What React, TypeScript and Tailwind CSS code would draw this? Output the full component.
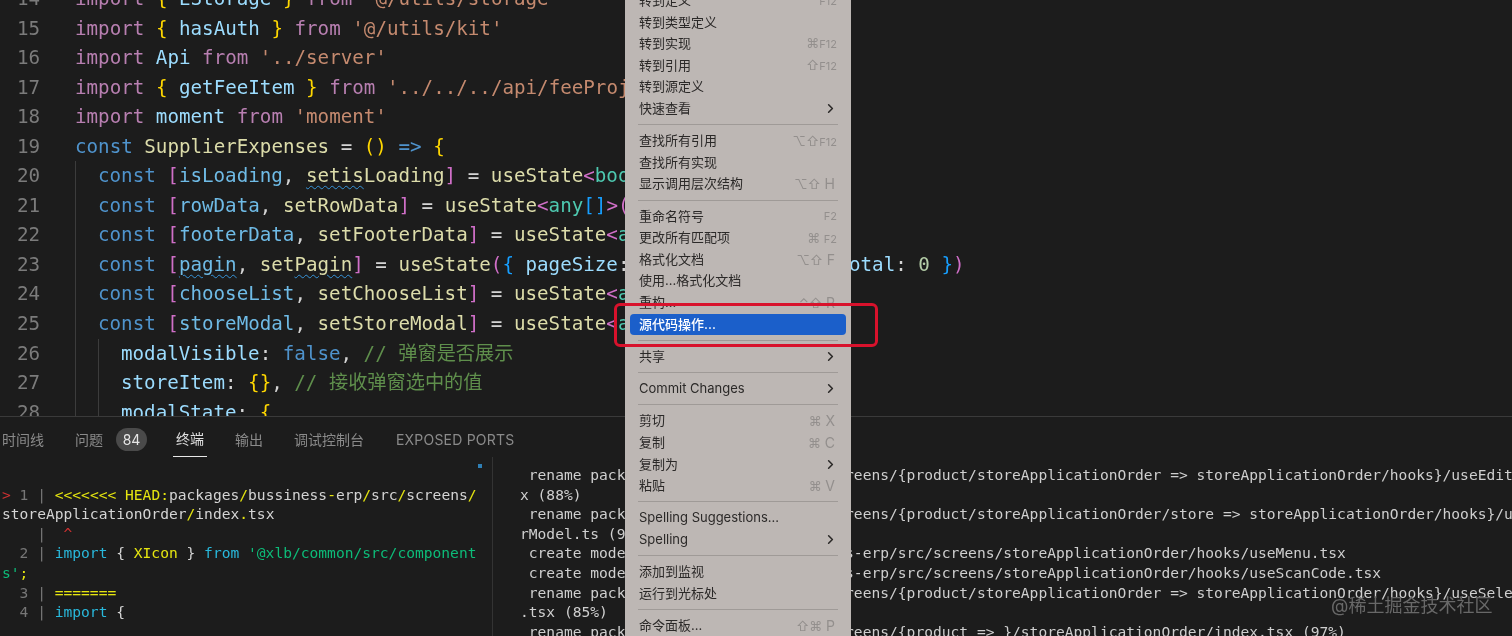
import { ChevronRight } from "lucide-react";

const kw = "text-[#b87fb1]";
const st = "text-[#4f93cc]";
const vr = "text-[#9cdcfe]";
const id = "text-[#6fbbe6]";
const fn = "text-[#dcdcaa]";
const str = "text-[#c58a6f]";
const yl = "text-[#ffd700]";
const pk = "text-[#d06fc8]";
const bl = "text-[#179fff]";
const ty = "text-[#4ec9b0]";
const op = "text-[#d4d4d4]";
const cm = "text-[#5f8f4c]";
const nm = "text-[#b5cea8]";

type Tok = [string, string, boolean?];

const codeLines: { n: number; ind: number; toks: Tok[] }[] = [
  { n: 14, ind: 0, toks: [["import", kw], [" ", op], ["{", yl], [" EStorage ", vr], ["}", yl], [" from ", kw], ["'@/utils/storage'", str]] },
  { n: 15, ind: 0, toks: [["import", kw], [" ", op], ["{", yl], [" hasAuth ", vr], ["}", yl], [" from ", kw], ["'@/utils/kit'", str]] },
  { n: 16, ind: 0, toks: [["import", kw], [" Api ", vr], ["from ", kw], ["'../server'", str]] },
  { n: 17, ind: 0, toks: [["import", kw], [" ", op], ["{", yl], [" getFeeItem ", vr], ["}", yl], [" from ", kw], ["'../../../api/feeProject'", str]] },
  { n: 18, ind: 0, toks: [["import", kw], [" moment ", vr], ["from ", kw], ["'moment'", str]] },
  { n: 19, ind: 0, toks: [["const", st], [" SupplierExpenses ", fn], ["= ", op], ["()", yl], [" => ", st], ["{", yl]] },
  { n: 20, ind: 1, toks: [["const", st], [" ", op], ["[", pk], ["isLoading", id], [", ", op], ["setis", fn, true], ["Loading", fn], ["]", pk], [" = ", op], ["useState", fn], ["<", pk], ["boolean", ty], [">", pk]] },
  { n: 21, ind: 1, toks: [["const", st], [" ", op], ["[", pk], ["rowData", id], [", ", op], ["setRowData", fn], ["]", pk], [" = ", op], ["useState", fn], ["<", pk], ["any", ty], ["[]", bl], [">", pk], ["([])", pk]] },
  { n: 22, ind: 1, toks: [["const", st], [" ", op], ["[", pk], ["footerData", id], [", ", op], ["setFooterData", fn], ["]", pk], [" = ", op], ["useState", fn], ["<", pk], ["any", ty], [">", pk]] },
  { n: 23, ind: 1, toks: [["const", st], [" ", op], ["[", pk], ["pagin", id, true], [", ", op], ["set", fn], ["Pagin", fn, true], ["]", pk], [" = ", op], ["useState", fn], ["(", pk], ["{", bl], [" pageSize", vr], [": ", op], ["100", nm], [", ", op], ["current", vr], [": ", op], ["1", nm], [", ", op], ["total", vr], [": ", op], ["0", nm], [" ", op], ["}", bl], [")", pk]] },
  { n: 24, ind: 1, toks: [["const", st], [" ", op], ["[", pk], ["chooseList", id], [", ", op], ["setChooseList", fn], ["]", pk], [" = ", op], ["useState", fn], ["<", pk], ["any", ty], [">", pk]] },
  { n: 25, ind: 1, toks: [["const", st], [" ", op], ["[", pk], ["storeModal", id], [", ", op], ["setStoreModal", fn], ["]", pk], [" = ", op], ["useState", fn], ["<", pk], ["any", ty], [">", pk]] },
  { n: 26, ind: 2, toks: [["modalVisible", vr], [": ", op], ["false", st], [", ", op], ["// 弹窗是否展示", cm]] },
  { n: 27, ind: 2, toks: [["storeItem", vr], [": ", op], ["{}", yl], [", ", op], ["// 接收弹窗选中的值", cm]] },
  { n: 28, ind: 2, toks: [["modalState", vr], [": ", op], ["{", yl]] },
];

type Item = { label?: string; sym?: string; key_?: string; sub?: boolean; active?: boolean; sep?: boolean };

const menu: Item[] = [
  { label: "转到定义", key_: "F12" },
  { label: "转到类型定义" },
  { label: "转到实现", sym: "⌘", key_: "F12" },
  { label: "转到引用", sym: "⇧", key_: "F12" },
  { label: "转到源定义" },
  { label: "快速查看", sub: true },
  { sep: true },
  { label: "查找所有引用", sym: "⌥⇧", key_: "F12" },
  { label: "查找所有实现" },
  { label: "显示调用层次结构", sym: "⌥⇧ ", key_: "H" },
  { sep: true },
  { label: "重命名符号", key_: "F2" },
  { label: "更改所有匹配项", sym: "⌘ ", key_: "F2" },
  { label: "格式化文档", sym: "⌥⇧ ", key_: "F" },
  { label: "使用...格式化文档" },
  { label: "重构...", sym: "⌃⇧ ", key_: "R" },
  { label: "源代码操作...", active: true },
  { sep: true },
  { label: "共享", sub: true },
  { sep: true },
  { label: "Commit Changes", sub: true },
  { sep: true },
  { label: "剪切", sym: "⌘ ", key_: "X" },
  { label: "复制", sym: "⌘ ", key_: "C" },
  { label: "复制为", sub: true },
  { label: "粘贴", sym: "⌘ ", key_: "V" },
  { sep: true },
  { label: "Spelling Suggestions..." },
  { label: "Spelling", sub: true },
  { sep: true },
  { label: "添加到监视" },
  { label: "运行到光标处" },
  { sep: true },
  { label: "命令面板...", sym: "⇧⌘ ", key_: "P" },
];

const tw = "text-[#d4d4d4]";
const ty2 = "text-[#e5e510]";
const cy = "text-[#29b8db]";
const gn = "text-[#0dbc79]";
const gr = "text-[#777777]";

const leftRows: Tok[][] = [
  [],
  [[">", "text-[#cd3131]"], [" 1 | ", gr], ["<<<<<<< HEAD:", ty2], ["packages", tw], ["/", ty2], ["bussiness", tw], ["-", ty2], ["erp", tw], ["/", ty2], ["src", tw], ["/", ty2], ["screens", tw], ["/", ty2]],
  [["store", tw], ["ApplicationOrder", tw], ["/", ty2], ["index", tw], [".", ty2], ["tsx", tw]],
  [["    | ", gr], [" ^", "text-[#cd3131]"]],
  [["  2 | ", gr], ["import", cy], [" { ", tw], ["XIcon", ty2], [" } ", tw], ["from", cy], [" '@xlb/common/src/component", gn]],
  [["s'", gn], [";", ty2]],
  [["  3 | ", gr], ["=======", ty2]],
  [["  4 | ", gr], ["import", cy], [" {", tw]],
];

const rightRows = [
  " rename packages/bussiness-erp/src/screens/{product/storeApplicationOrder => storeApplicationOrder/hooks}/useEditModal.ts",
  "x (88%)",
  " rename packages/bussiness-erp/src/screens/{product/storeApplicationOrder/store => storeApplicationOrder/hooks}/useOrderModel",
  "rModel.ts (97%)",
  " create mode 100644 packages/bussiness-erp/src/screens/storeApplicationOrder/hooks/useMenu.tsx",
  " create mode 100644 packages/bussiness-erp/src/screens/storeApplicationOrder/hooks/useScanCode.tsx",
  " rename packages/bussiness-erp/src/screens/{product/storeApplicationOrder => storeApplicationOrder/hooks}/useSelectModal",
  ".tsx (85%)",
  " rename packages/bussiness-erp/src/screens/{product => }/storeApplicationOrder/index.tsx (97%)",
];

const mono = "font-['DejaVu_Sans_Mono','Noto_Sans_CJK_SC',monospace]";

export default function App() {
  return (
    <div className="relative w-[1512px] h-[636px] overflow-hidden bg-[#1c1c1c] blur-[0.6px]">
      {/* editor */}
      <div className={`relative h-[416px] overflow-hidden ${mono} text-[19.2px] leading-[29.55px]`}>
        <div className="-mt-[16px]">
          {codeLines.map((line) => (
            <div key={line.n} className="flex h-[29.55px] whitespace-pre">
              <div className="w-[40px] shrink-0 text-right text-[#7b7b7b]">{line.n}</div>
              <div className="w-[35px] shrink-0" />
              {line.ind > 0 && (
                <div className="w-[23px] shrink-0 border-l border-[#3c3c3c]" />
              )}
              {line.ind > 1 && (
                <div className="w-[23px] shrink-0 border-l border-[#3c3c3c]" />
              )}
              <div>
                {line.toks.map((t, i) => (
                  <span
                    key={i}
                    className={`${t[1]} ${t[2] ? "underline decoration-wavy decoration-[#3794d8] decoration-1 underline-offset-[3px]" : ""}`}
                  >
                    {t[0]}
                  </span>
                ))}
              </div>
            </div>
          ))}
        </div>
      </div>

      {/* bottom panel */}
      <div className="border-t border-[#3a3a3a]">
        <div className="flex items-center h-[40px] pt-[4px] pl-[2px] font-['Inter','Noto_Sans_CJK_SC',sans-serif] text-[14px] text-[#8a8a8a]">
          <span>时间线</span>
          <span className="ml-[31px]">问题</span>
          <span className="ml-[13px] w-[31px] h-[23px] rounded-full bg-[#4a4a4a] text-[#e6e6e6] flex items-center justify-center">84</span>
          <span className="ml-[26px] px-[3px] h-[36px] flex items-center text-[#e0e0e0] border-b border-[#e8e8e8]">终端</span>
          <span className="ml-[28px]">输出</span>
          <span className="ml-[31px]">调试控制台</span>
          <span className="ml-[32px] tracking-[0.2px]">EXPOSED PORTS</span>
        </div>

        <div className={`flex ${mono} text-[14.6px] leading-[19.6px] whitespace-pre`}>
          <div className="relative w-[492px] shrink-0 pl-[2px] pt-[8px] h-[180px] overflow-hidden">
            <div className="absolute left-[478px] top-[7px] w-[4px] h-[4px] bg-[#2f7fb5]" />
            {leftRows.map((row, i) => (
              <div key={i} className="h-[19.6px]">
                {row.map((t, j) => (
                  <span key={j} className={t[1]}>{t[0]}</span>
                ))}
              </div>
            ))}
          </div>
          <div className="flex-1 min-w-0 overflow-hidden border-l border-[#333333] pl-[27px] pt-[8px] text-[#cfcfcf]">
            {rightRows.map((row, i) => (
              <div key={i} className="h-[19.6px]">{row}</div>
            ))}
          </div>
        </div>
      </div>

      {/* context menu */}
      <div className="absolute left-[625px] top-0 w-[226px] h-[636px] overflow-hidden bg-[#bdb7b4] font-['Inter','Noto_Sans_CJK_SC',sans-serif] text-[13px] text-[#2b2928]">
        <div className="-mt-[10px]">
          {menu.map((item, i) =>
            item.sep ? (
              <div key={i} className="h-[10.65px] mx-[13px] flex items-center">
                <div className="w-full h-px bg-[#9f9a97]" />
              </div>
            ) : (
              <div
                key={i}
                className={`h-[21.6px] mx-[5px] px-[9px] rounded-[4px] flex items-center justify-between ${item.active ? "bg-[#1b5fca] text-white font-medium" : ""}`}
              >
                <span>{item.label}</span>
                {item.key_ && (
                  <span className="flex items-baseline whitespace-pre text-[#938f8d]">
                    {item.sym && <span className="text-[13px] leading-[16px]">{item.sym}</span>}
                    <span className={item.key_.length > 1 ? "text-[11px] leading-[16px]" : "text-[14px] leading-[16px] pr-[2px]"}>{item.key_}</span>
                  </span>
                )}
                {item.sub && <ChevronRight size={15} strokeWidth={2.5} className="text-[#2b2928] -mr-[1px]" />}
              </div>
            )
          )}
        </div>
      </div>

      {/* red highlight drawn over the screenshot */}
      <div className="absolute left-[614px] top-[303px] w-[264px] h-[44px] rounded-[6px] border-[3px] border-[#d8122c]" />

      {/* watermark */}
      <div className="absolute left-[1331px] top-[594px] font-['Inter','Noto_Sans_CJK_SC',sans-serif] text-[18px] leading-[24px] text-[#686868]">
        @稀土掘金技术社区
      </div>
    </div>
  );
}
